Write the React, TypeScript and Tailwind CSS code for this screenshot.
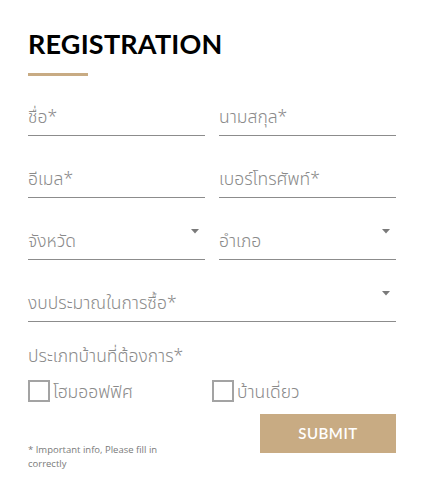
import React from "react";

const Arrow = () => (
  <svg width="8" height="5" viewBox="0 0 8 5" className="absolute right-[6px] top-[7px]">
    <path d="M0 0 L8 0 L4 4.5 Z" fill="#7a7a7a" />
  </svg>
);

const Field = ({ label, select }: { label: string; select?: boolean }) => (
  <div className="relative h-[38px] border-b-[1.5px] border-[#8c8c8c] flex items-end pb-[7px]">
    <span className="text-[17.5px] leading-[24px] font-light text-[#8a8a8a]">{label}</span>
    {select && <Arrow />}
  </div>
);

const Check = ({ label }: { label: string }) => (
  <label className="flex items-center gap-[3px]">
    <span className="w-[22px] h-[22px] shrink-0 border-2 border-[#a3a3a3] bg-white" />
    <span className="text-[17.5px] leading-[22px] font-light text-[#8a8a8a]">{label}</span>
  </label>
);

export default function App() {
  return (
    <div
      className="w-[424px] h-[479px] bg-white px-[28px] pt-[28px]"
      style={{ fontFamily: '"Noto Sans", "Noto Sans Thai", sans-serif' }}
    >
      <h1
        className="text-[27px] leading-[32px] font-bold text-black tracking-[0.2px]"
        style={{ fontFamily: 'Lato, sans-serif' }}
      >
        REGISTRATION
      </h1>
      <div className="w-[60px] h-[3px] bg-[#c8ab83] mt-[13px]" />
      <div className="grid grid-cols-2 gap-x-[14px] gap-y-[24px] mt-[22px]">
        <Field label="ชื่อ*" />
        <Field label="นามสกุล*" />
        <Field label="อีเมล*" />
        <Field label="เบอร์โทรศัพท์*" />
        <Field label="จังหวัด" select />
        <Field label="อำเภอ" select />
        <div className="col-span-2">
          <Field label="งบประมาณในการซื้อ*" select />
        </div>
      </div>
      <div className="mt-[21px] text-[17.5px] leading-[24px] font-light text-[#8a8a8a]">ประเภทบ้านที่ต้องการ*</div>
      <div className="grid grid-cols-[184px_1fr] mt-[13px]">
        <Check label="โฮมออฟฟิศ" />
        <Check label="บ้านเดี่ยว" />
      </div>
      <div className="flex justify-between items-start mt-[12px]">
        <p
          className="w-[142px] text-[9.5px] leading-[14px] text-[#7a7a7a] mt-[29px]"
          style={{ fontFamily: '"Open Sans", sans-serif' }}
        >
          * Important info, Please fill in correctly
        </p>
        <button
          className="w-[136px] h-[39px] bg-[#c8ab83] text-white text-[15px] font-semibold tracking-[0.5px]"
          style={{ fontFamily: 'Lato, sans-serif' }}
        >
          SUBMIT
        </button>
      </div>
    </div>
  );
}
